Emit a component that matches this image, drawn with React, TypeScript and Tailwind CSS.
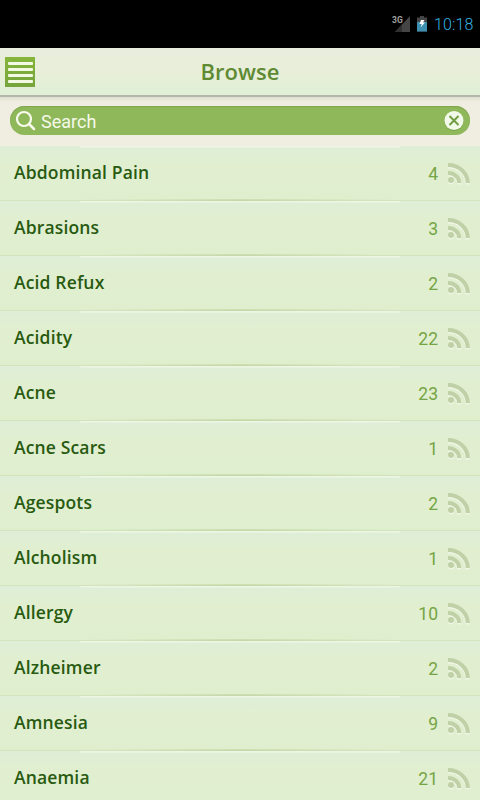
const conditions = [
  { name: 'Abdominal Pain', count: 4 },
  { name: 'Abrasions', count: 3 },
  { name: 'Acid Refux', count: 2 },
  { name: 'Acidity', count: 22 },
  { name: 'Acne', count: 23 },
  { name: 'Acne Scars', count: 1 },
  { name: 'Agespots', count: 2 },
  { name: 'Alcholism', count: 1 },
  { name: 'Allergy', count: 10 },
  { name: 'Alzheimer', count: 2 },
  { name: 'Amnesia', count: 9 },
  { name: 'Anaemia', count: 21 },
];

function StatusBar() {
  return (
    <div className="flex h-12 shrink-0 items-center justify-end bg-black pr-[6px] font-[Roboto,sans-serif]">
      <svg width="20" height="18" viewBox="0 0 20 18" className="mr-[5px]">
        <path d="M18 1V17H3Z" fill="#454545" />
        <path d="M10 9V17H3Z" fill="#303030" />
        <text x="0" y="8" fontSize="8.5" fontWeight="700" fill="#a0a0a0" fontFamily="Roboto">3G</text>
      </svg>
      <svg width="10" height="16" viewBox="0 0 10 16" className="mr-[7px]">
        <path d="M3 0H7V1.500H10V15.500H0V1.500H3Z" fill="#454545" />
        <path d="M0 6H10V15.500H0Z" fill="#3c8fae" />
        <path d="M4 4H7.500L6 6.500H8L3.500 11.500L4.800 8H2.500Z" fill="#fff" />
      </svg>
      <span className="w-10 pt-[2px] text-base leading-5 font-light tracking-[0.15px] whitespace-nowrap text-[#33b5e5]">10:18</span>
    </div>
  );
}

function Header() {
  return (
    <header className="grid h-[49px] shrink-0 grid-cols-[40px_1fr_40px] items-center border-b-2 border-[#b3b7ab] bg-gradient-to-b from-[#e9ecdc] via-[#e8efd9] to-[#e0efd7]">
      <button aria-label="Menu" className="ml-[5px] flex h-[30px] w-[30px] flex-col items-center gap-[3px] bg-gradient-to-b from-[#86b53c] to-[#76a43d] pt-[5px]">
        <span className="h-[3px] w-[25px] shrink-0 rounded-[1px] bg-[#f2f9e5]" />
        <span className="h-[3px] w-[25px] shrink-0 rounded-[1px] bg-[#f2f9e5]" />
        <span className="h-[3px] w-[25px] shrink-0 rounded-[1px] bg-[#f2f9e5]" />
        <span className="h-[3px] w-[25px] shrink-0 rounded-[1px] bg-[#f2f9e5]" />
      </button>
      <h1 className="pb-[2px] text-center text-[22px] leading-[30px] font-semibold text-[#5f8a33]">Browse</h1>
    </header>
  );
}

function SearchBar() {
  return (
    <div className="h-[49px] shrink-0 bg-gradient-to-b from-[#dddfcf] via-[#f0eee2] via-10% to-[#efeee1] px-[10px] pt-[9px]">
      <div className="flex h-[29px] items-center rounded-full bg-[#8fb85b] pr-[6px] pl-[5px] shadow-[inset_0_1px_1px_#7fa54d]">
        <svg width="22" height="22" viewBox="0 0 22 22" fill="none" stroke="#f8fbec">
          <circle cx="9" cy="9" r="7" strokeWidth="2.200" />
          <path d="M14 14L19 19" strokeWidth="2.500" strokeLinecap="round" />
        </svg>
        <span className="ml-1 flex-1 pt-[2px] font-[Roboto,sans-serif] text-lg leading-6 text-[#f5f9e9]">Search</span>
        <svg width="20" height="20" viewBox="0 0 20 20">
          <circle cx="10" cy="10.500" r="9.500" fill="#77a345" />
          <circle cx="10" cy="9.500" r="9.500" fill="#f3f9e9" />
          <path d="M5.500 5L14.500 14M14.500 5L5.500 14" stroke="#719d43" strokeWidth="2" />
        </svg>
      </div>
    </div>
  );
}

function FeedIcon() {
  return (
    <svg width="24" height="24" viewBox="0 0 24 24">
      <g transform="translate(0 1.5)" stroke="#f0f6e5" fill="none" strokeWidth="4">
        <path d="M1 4A18.500 18 0 0 1 20.500 22" />
        <path d="M1 12A10.500 10 0 0 1 12.200 22" />
        <circle cx="4" cy="19" r="3" fill="#f0f6e5" stroke="none" />
      </g>
      <g stroke="#c0d1a7" fill="none" strokeWidth="4">
        <path d="M1 4A19.500 18 0 0 1 20.800 22" />
        <path d="M1 12A11 10 0 0 1 12.200 22" />
        <circle cx="4" cy="19" r="3" fill="#c0d1a7" stroke="none" />
      </g>
    </svg>
  );
}

function Row({ name, count }: { name: string; count: number }) {
  return (
    <li className="grid h-[55px] shrink-0 grid-rows-[2px_51px_2px] bg-gradient-to-b from-[#deeed7] via-[#e1efd0] via-35% to-[#dfefce]">
      <div className="mx-20 h-[2px] bg-gradient-to-b from-[#eff7e3] to-[#e5f1de]" />
      <div className="flex items-center pr-[9px] pb-px pl-[14px]">
        <span className="flex-1 pb-[3px] text-[17.500px] leading-6 font-semibold tracking-[0.15px] text-[#285a10]">{name}</span>
        <span className="mr-[9px] pt-px font-[Roboto,sans-serif] text-[17.500px] leading-6 text-[#75a444]">{count}</span>
        <FeedIcon />
      </div>
      <div className="flex flex-col">
        <div className="mx-20 h-px bg-gradient-to-r from-transparent via-[#cddeb2] to-transparent" />
        <div className="h-px bg-[linear-gradient(90deg,#d3e3bc_0%,#d3e3bc_25%,#c4d8a8_50%,#d3e3bc_75%,#d3e3bc_100%)]" />
      </div>
    </li>
  );
}

export default function App() {
  return (
    <main className="flex h-[800px] w-[480px] flex-col overflow-hidden bg-[#e1efd0] font-['Open_Sans',sans-serif]">
      <StatusBar />
      <Header />
      <SearchBar />
      <ul className="flex min-h-0 flex-1 flex-col overflow-hidden">
        {conditions.map((item) => (
          <Row key={item.name} name={item.name} count={item.count} />
        ))}
      </ul>
    </main>
  );
}
